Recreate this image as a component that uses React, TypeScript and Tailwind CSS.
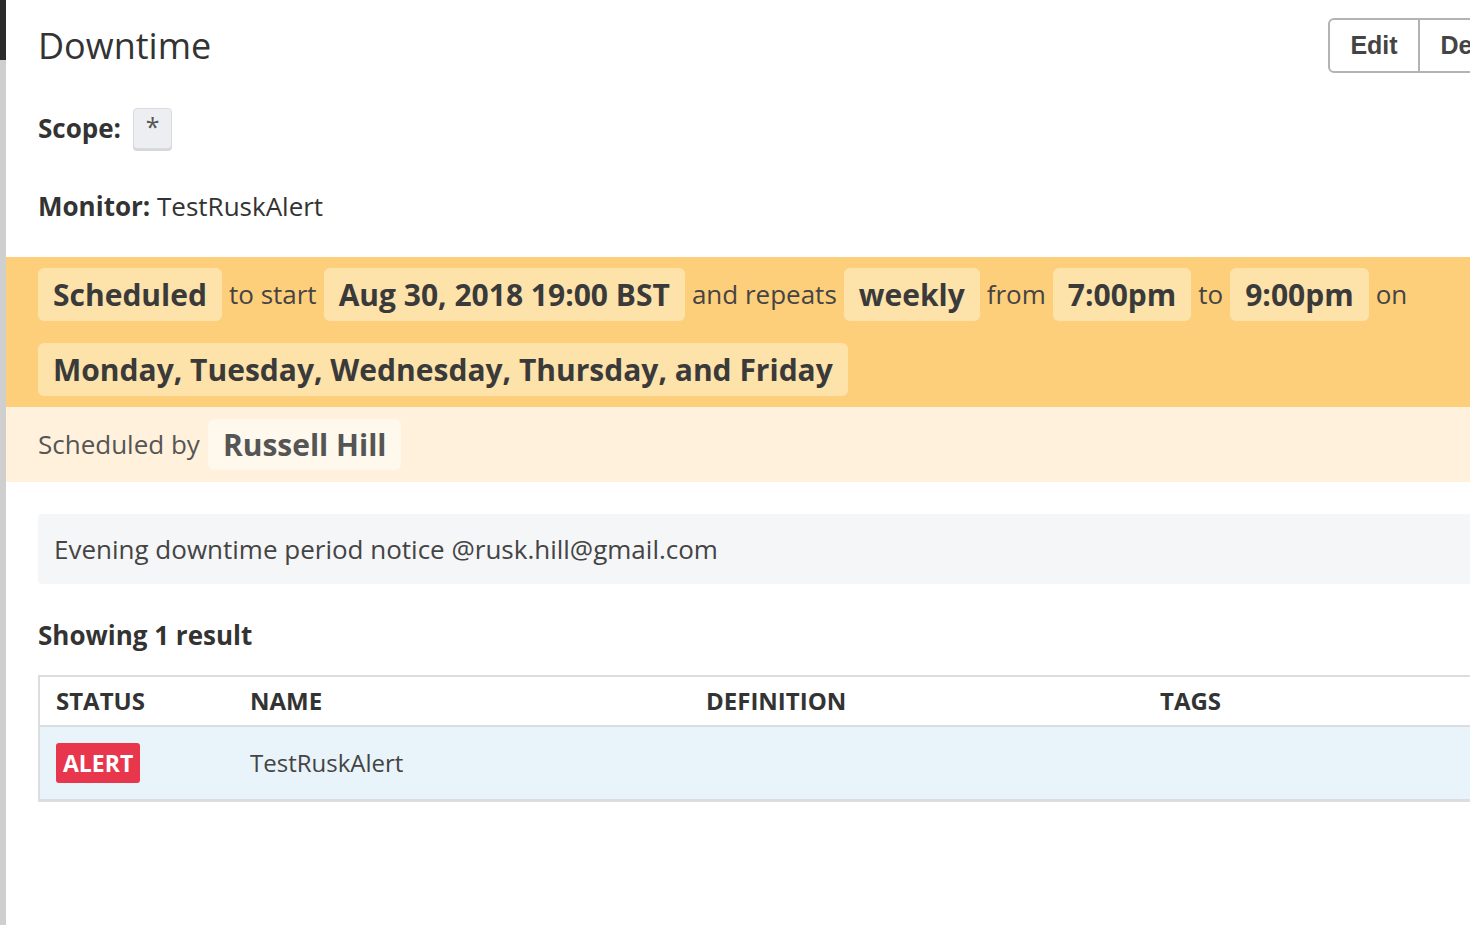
import React from "react";

const chip = "rounded-md bg-[#fde2aa] px-[15px] h-[53px] flex items-center font-bold text-[30px] text-[#3a3a3a]";
const word = "text-[26px] text-[#444]";

const rows = [{ status: "ALERT", name: "TestRuskAlert", definition: "", tags: "" }];

function App() {
  return (
    <div className="relative flex w-[1470px] h-[925px] overflow-hidden bg-white font-['Open_Sans',sans-serif] text-[#333]">
      {/* left gutter */}
      <div className="flex flex-col w-[6px] shrink-0">
        <div className="h-[60px] bg-[#2b2b2b]" />
        <div className="flex-1 bg-[#cfcfcf]" />
      </div>

      <div className="w-[1564px] shrink-0 flex flex-col">
        {/* header */}
        <div className="flex items-center justify-between px-[32px] pt-[18px]">
          <h1 className="text-[36px] leading-[55px] text-[#333]">Downtime</h1>
          <div className="flex h-[55px] font-['Liberation_Sans',Arial,sans-serif] font-bold text-[25px] text-[#444]">
            <button className="w-[92px] border-2 border-[#b3b3b3] rounded-l-[6px] bg-white">Edit</button>
            <button className="w-[118px] border-2 border-l-0 border-[#b3b3b3] rounded-r-[6px] bg-white">Delete</button>
          </div>
        </div>

        <div className="flex items-center gap-[12px] px-[32px] mt-[35px]">
          <span className="text-[26px] font-bold">Scope:</span>
          <span className="flex justify-center w-[39px] h-[41px] rounded-[4px] border border-[#d9dbdf] bg-[#eceef1] shadow-[0_2px_0_#d5d7db] text-[25px] leading-[34px] text-[#555]">
            *
          </span>
        </div>

        <div className="px-[32px] mt-[40px] text-[26px] leading-[34px]">
          <span className="font-bold">Monitor:</span> TestRuskAlert
        </div>

        {/* schedule banner */}
        <div className="mt-[34px] bg-[#fecf7b] px-[32px] py-[11px] flex flex-wrap items-center gap-x-[7px] gap-y-[22px]">
          <span className={chip}>Scheduled</span>
          <span className={word}>to start</span>
          <span className={chip}>Aug 30, 2018 19:00 BST</span>
          <span className={word}>and repeats</span>
          <span className={chip}>weekly</span>
          <span className={word}>from</span>
          <span className={chip}>7:00pm</span>
          <span className={word}>to</span>
          <span className={chip}>9:00pm</span>
          <span className={word}>on</span>
          <span className={chip}>Monday, Tuesday, Wednesday, Thursday, and Friday</span>
        </div>
        <div className="bg-[#fff1db] px-[32px] py-[12px] flex items-center gap-[8px]">
          <span className="text-[26px] text-[#555]">Scheduled by</span>
          <span className="rounded-md bg-[#fff8ec] px-[15px] h-[51px] flex items-center font-bold text-[30px] text-[#555]">
            Russell Hill
          </span>
        </div>

        <div className="px-[32px] mt-[32px]">
          <div className="h-[70px] flex items-center rounded-[4px] bg-[#f5f6f8] px-[16px] text-[26px] text-[#444]">
            Evening downtime period notice @rusk.hill@gmail.com
          </div>
        </div>

        <div className="px-[32px] mt-[34px] text-[26px] font-bold leading-[34px] text-[#333]">Showing 1 result</div>

        <div className="px-[32px] mt-[23px]">
          <table className="w-full border-collapse border-l-2 border-[#dcdde1] text-[24px]">
            <thead>
              <tr className="h-[50px] border-t-2 border-b-2 border-[#dcdde1] text-left">
                <th className="w-[193px] pl-[16px] font-bold">STATUS</th>
                <th className="w-[456px] pl-[18px] font-bold">NAME</th>
                <th className="w-[454px] pl-[18px] font-bold">DEFINITION</th>
                <th className="pl-[18px] font-bold">TAGS</th>
              </tr>
            </thead>
            <tbody>
              {rows.map((r) => (
                <tr key={r.name} className="h-[74px] bg-[#e8f4fa] border-b-[3px] border-[#dcdde1]">
                  <td className="pl-[16px]">
                    <span className="inline-flex items-center h-[40px] px-[7px] rounded-[3px] bg-[#e8364d] text-white font-bold text-[23px]">
                      {r.status}
                    </span>
                  </td>
                  <td className="pl-[18px] text-[#444]">{r.name}</td>
                  <td className="pl-[18px]">{r.definition}</td>
                  <td className="pl-[18px]">{r.tags}</td>
                </tr>
              ))}
            </tbody>
          </table>
        </div>
      </div>
    </div>
  );
}

export default App;
